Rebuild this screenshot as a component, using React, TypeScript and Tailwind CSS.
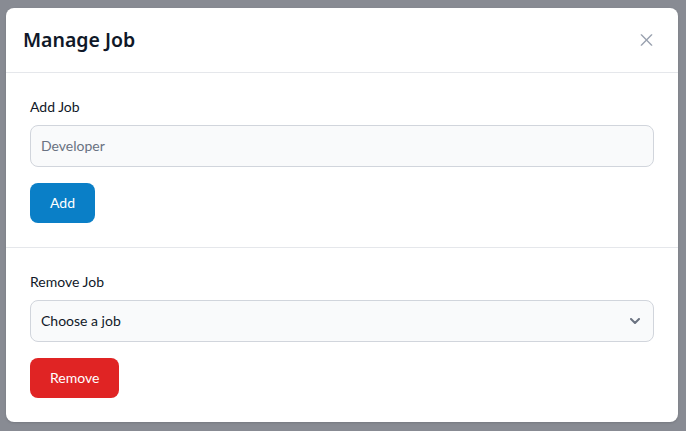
export default function App() {
  return (
    <div
      className="w-[686px] h-[431px] bg-[#888b93] pt-2 px-1.5 overflow-hidden"
      style={{ fontFamily: 'Lato, "Noto Sans", sans-serif' }}
    >
      <div className="w-[672px] bg-white rounded-lg shadow-sm">
        <div className="flex items-center justify-between p-4 border-b border-gray-200">
          <h3
            className="text-[19.5px] font-semibold text-gray-900 leading-7 pl-px"
            style={{ fontFamily: '"Noto Sans", sans-serif' }}
          >
            Manage Job
          </h3>
          <button className="w-8 h-8 flex items-center justify-center rounded-lg text-gray-400">
            <svg className="w-[13px] h-[12px]" viewBox="0 0 14 14" fill="none" stroke="currentColor" strokeWidth="1.6" strokeLinecap="round">
              <path d="M1 1l12 12M13 1L1 13" />
            </svg>
          </button>
        </div>
        <div className="p-6 border-b border-gray-200">
          <label className="block mb-2 text-sm leading-5 text-gray-900">Add Job</label>
          <input
            type="text"
            placeholder="Developer"
            className="block w-full p-2.5 text-sm leading-5 bg-gray-50 border border-gray-300 rounded-lg text-gray-900 placeholder:text-gray-500 outline-none"
          />
          <button className="mt-4 px-5 py-2.5 text-sm leading-5 text-white bg-[#0a7fc7] rounded-lg">Add</button>
        </div>
        <div className="p-6">
          <label className="block mb-2 text-sm leading-5 text-gray-900">Remove Job</label>
          <div className="flex items-center justify-between w-full p-2.5 text-sm leading-5 bg-gray-50 border border-gray-300 rounded-lg text-gray-900">
            <span>Choose a job</span>
            <svg className="w-[10px] h-[6px] mr-[3px]" viewBox="0 0 10 6" fill="none" stroke="#6b7280" strokeWidth="2" strokeLinecap="round" strokeLinejoin="round">
              <path d="M1 1l4 4 4-4" />
            </svg>
          </div>
          <button className="mt-4 px-5 py-2.5 text-sm leading-5 text-white bg-[#e02424] rounded-lg">Remove</button>
        </div>
      </div>
    </div>
  );
}
